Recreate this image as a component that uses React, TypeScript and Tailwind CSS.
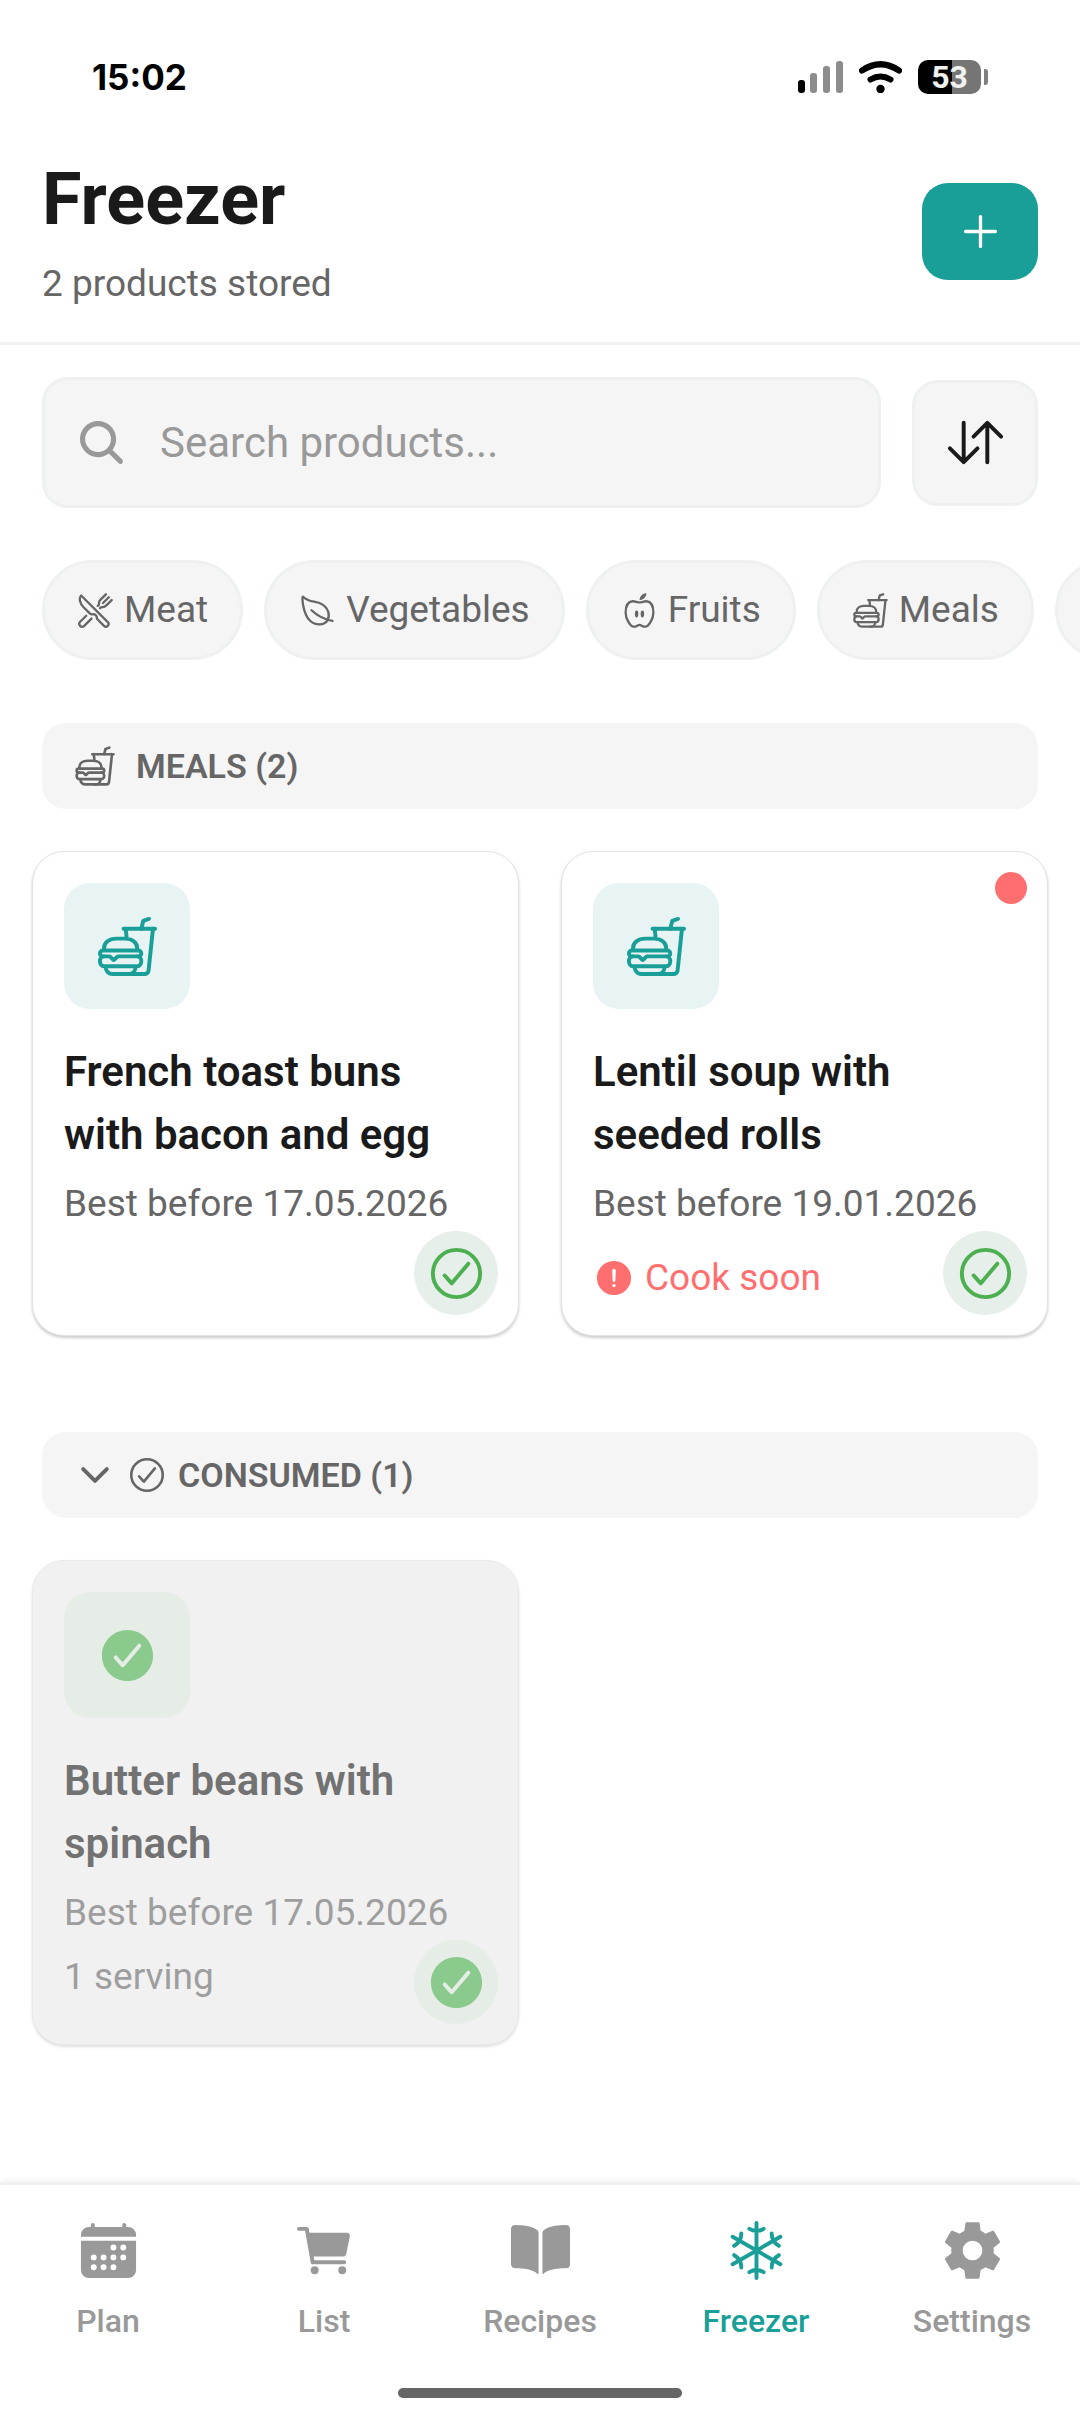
import type { ReactNode } from 'react'
import type { IconType } from 'react-icons'
import {
  IoAdd,
  IoAlertCircle,
  IoBook,
  IoCalendar,
  IoCart,
  IoCheckmarkCircle,
  IoCheckmarkCircleOutline,
  IoChevronDown,
  IoFastFoodOutline,
  IoLeafOutline,
  IoNutritionOutline,
  IoRestaurantOutline,
  IoSearch,
  IoSettingsSharp,
  IoSnowOutline,
  IoSwapVertical,
} from 'react-icons/io5'

type Product = {
  name: string
  bestBefore: string
  servings?: string
  soon?: boolean
  consumed?: boolean
}

const meals: Product[] = [
  { name: 'French toast buns with bacon and egg', bestBefore: '17.05.2026' },
  { name: 'Lentil soup with seeded rolls', bestBefore: '19.01.2026', soon: true },
]

const consumed: Product[] = [
  {
    name: 'Butter beans with spinach',
    bestBefore: '17.05.2026',
    servings: '1 serving',
    consumed: true,
  },
]

const categories: { label: string; icon: IconType }[] = [
  { label: 'Meat', icon: IoRestaurantOutline },
  { label: 'Vegetables', icon: IoLeafOutline },
  { label: 'Fruits', icon: IoNutritionOutline },
  { label: 'Meals', icon: IoFastFoodOutline },
]

const tabs: { label: string; icon: IconType; active?: boolean }[] = [
  { label: 'Plan', icon: IoCalendar },
  { label: 'List', icon: IoCart },
  { label: 'Recipes', icon: IoBook },
  { label: 'Freezer', icon: IoSnowOutline, active: true },
  { label: 'Settings', icon: IoSettingsSharp },
]

function StatusBar() {
  return (
    <div className="flex h-[130px] items-center justify-between px-[92px] pt-6 text-black">
      <span className="font-[Inter] text-[35px] leading-[44px] font-bold">15:02</span>
      <div className="flex items-center gap-4">
        <svg className="h-8 w-[45px]" viewBox="0 0 45 32" aria-hidden="true">
          <rect x="0" y="19" width="7" height="13" rx="3" fill="#000" />
          <rect x="12" y="12" width="7" height="20" rx="3" fill="#8c8c8c" />
          <rect x="25" y="5" width="7" height="27" rx="3" fill="#8c8c8c" />
          <rect x="38" y="0" width="7" height="32" rx="3" fill="#8c8c8c" />
        </svg>
        <svg className="h-8 w-[43px]" viewBox="0 0 43 32" fill="none" stroke="#000" strokeLinecap="round" aria-hidden="true">
          <path d="M3 9.500Q21.500 -3 40 9.500" strokeWidth="6.200" />
          <path d="M11.500 18.500Q21.500 12.500 31.500 18.500" strokeWidth="6" />
          <circle cx="21.500" cy="28" r="4.200" fill="#000" stroke="none" />
        </svg>
        <div className="flex items-center gap-[3px]">
          <span className="flex h-[34px] w-[63px] items-center justify-center rounded-[10px] bg-linear-to-r from-black from-54% to-[#757575] to-54% text-[32px] leading-[34px] font-bold text-[#f0f2ef]">
            53
          </span>
          <span className="h-4 w-1 rounded-r-[3px] bg-[#808080]" />
        </div>
      </div>
    </div>
  )
}

function SectionHeader({ children }: { children: ReactNode }) {
  return (
    <div className="mx-[42px] flex h-[86px] items-center rounded-[24px] bg-[#f5f5f5] px-8 text-[34px] leading-[40px] font-semibold text-[#666]">
      {children}
    </div>
  )
}

function ProductCard({ product }: { product: Product }) {
  const done = product.consumed
  const ToggleIcon = done ? IoCheckmarkCircle : IoCheckmarkCircleOutline

  return (
    <article
      className={`relative min-h-[485px] rounded-[32px] border p-[31px] ${
        done
          ? 'border-[#e9eaea] bg-[#f1f1f1] shadow-[0_2px_3px_rgba(0,0,0,0.12)]'
          : 'border-[#e3e3e3] bg-white shadow-[0_2px_3px_rgba(0,0,0,0.2)]'
      }`}
    >
      <div
        className={`flex size-[126px] items-center justify-center rounded-[26px] ${
          done ? 'bg-[#e6ede7] text-[#8aca8d]' : 'bg-[#e8f4f4] text-[#1a9f98]'
        }`}
      >
        {done ? <IoCheckmarkCircle size={63} /> : <IoFastFoodOutline size={63} />}
      </div>
      <h3
        className={`mt-[31px] text-[42px] leading-[63px] font-semibold ${
          done ? 'text-[#727272]' : 'text-[#1a1a1a]'
        }`}
      >
        {product.name}
      </h3>
      <p className={`mt-3 text-[37px] leading-[52px] ${done ? 'text-[#9e9e9e]' : 'text-[#666]'}`}>
        Best before {product.bestBefore}
      </p>
      {product.servings && (
        <p className="mt-3 text-[37px] leading-[52px] text-[#9e9e9e]">{product.servings}</p>
      )}
      {product.soon && (
        <p className="mt-[22px] flex items-center gap-[10px] text-[37px] leading-[52px] text-[#ff6f6f]">
          <IoAlertCircle size={42} />
          Cook soon
        </p>
      )}
      {product.soon && (
        <span className="absolute top-5 right-5 size-8 rounded-full bg-[#ff6f6f]" />
      )}
      <button
        type="button"
        aria-label={done ? 'Mark as stored' : 'Mark as consumed'}
        className={`absolute right-5 bottom-5 flex size-[84px] items-center justify-center rounded-full ${
          done ? 'bg-[#e6ede7] text-[#8aca8d]' : 'bg-[#e6efe9] text-[#4caf50]'
        }`}
      >
        <ToggleIcon size={63} />
      </button>
    </article>
  )
}

function ProductGrid({ products }: { products: Product[] }) {
  return (
    <div className="mx-8 mt-[42px] grid grid-cols-2 gap-[42px]">
      {products.map((product) => (
        <ProductCard key={product.name} product={product} />
      ))}
    </div>
  )
}

export default function App() {
  return (
    <div className="flex min-h-screen flex-col overflow-hidden bg-white font-[Roboto,sans-serif]">
      <StatusBar />

      <header className="flex items-center justify-between border-b-3 border-[#f1f1f1] px-[42px] pt-[25px] pb-[34px]">
        <div>
          <h1 className="text-[72px] leading-[90px] font-bold text-[#1a1a1a]">Freezer</h1>
          <p className="mt-[15px] text-[37px] leading-[48px] text-[#666]">2 products stored</p>
        </div>
        <button
          type="button"
          aria-label="Add product"
          className="flex h-[97px] w-[116px] items-center justify-center rounded-[26px] bg-[#1a9f98] text-white"
        >
          <IoAdd size={53} />
        </button>
      </header>

      <main className="flex-1">
        {/* Search and sort */}
        <div className="flex items-center gap-[31px] px-[42px] pt-8">
          <label className="flex h-[131px] flex-1 items-center gap-8 rounded-[26px] border-3 border-[#eff0f0] bg-[#f5f5f5] px-[30px] text-[#999]">
            <IoSearch size={53} />
            <input
              type="text"
              aria-label="Search products"
              placeholder="Search products..."
              className="min-w-0 flex-1 bg-transparent text-[42px] leading-[52px] outline-none placeholder:text-[#999]"
            />
          </label>
          <button
            type="button"
            aria-label="Sort"
            className="flex size-[126px] items-center justify-center rounded-[26px] border-3 border-[#eff0f0] bg-[#f5f5f5] text-[#1a1a1a]"
          >
            <IoSwapVertical size={63} />
          </button>
        </div>

        {/* Category filters */}
        <div className="mt-[52px] flex gap-[21px] overflow-hidden pl-[42px]">
          {categories.map(({ label, icon: Icon }) => (
            <button
              key={label}
              type="button"
              className="flex h-[100px] shrink-0 items-center gap-[10px] rounded-full border-3 border-[#eff0f0] bg-[#f5f5f5] px-8 text-[37px] leading-[48px] text-[#666]"
            >
              <Icon size={37} />
              {label}
            </button>
          ))}
          <button
            type="button"
            aria-label="More categories"
            className="h-[100px] w-[200px] shrink-0 rounded-full border-3 border-[#eff0f0] bg-[#f5f5f5]"
          />
        </div>

        <section className="mt-[63px]">
          <SectionHeader>
            <IoFastFoodOutline size={42} />
            <h2 className="ml-5">MEALS (2)</h2>
          </SectionHeader>
          <ProductGrid products={meals} />
        </section>

        <section className="mt-24">
          <SectionHeader>
            <button type="button" aria-expanded="true" className="flex items-center">
              <IoChevronDown size={42} />
              <IoCheckmarkCircleOutline size={42} className="mx-[10px]" />
              CONSUMED (1)
            </button>
          </SectionHeader>
          <ProductGrid products={consumed} />
        </section>
      </main>

      <nav className="border-t-3 border-[#f0f1f1] bg-white pt-[34px] shadow-[0_-2px_6px_rgba(0,0,0,0.05)]">
        <div className="grid grid-cols-5">
          {tabs.map(({ label, icon: Icon, active }) => (
            <a
              key={label}
              href="#"
              className={`flex flex-col items-center gap-[19px] text-[32px] leading-[40px] font-medium ${
                active ? 'text-[#1a9f98]' : 'text-[#999]'
              }`}
            >
              <Icon size={63} />
              {label}
            </a>
          ))}
        </div>
        <div className="mx-auto mt-[47px] mb-[26px] h-[10px] w-[284px] rounded-full bg-[#666]" />
      </nav>
    </div>
  )
}
